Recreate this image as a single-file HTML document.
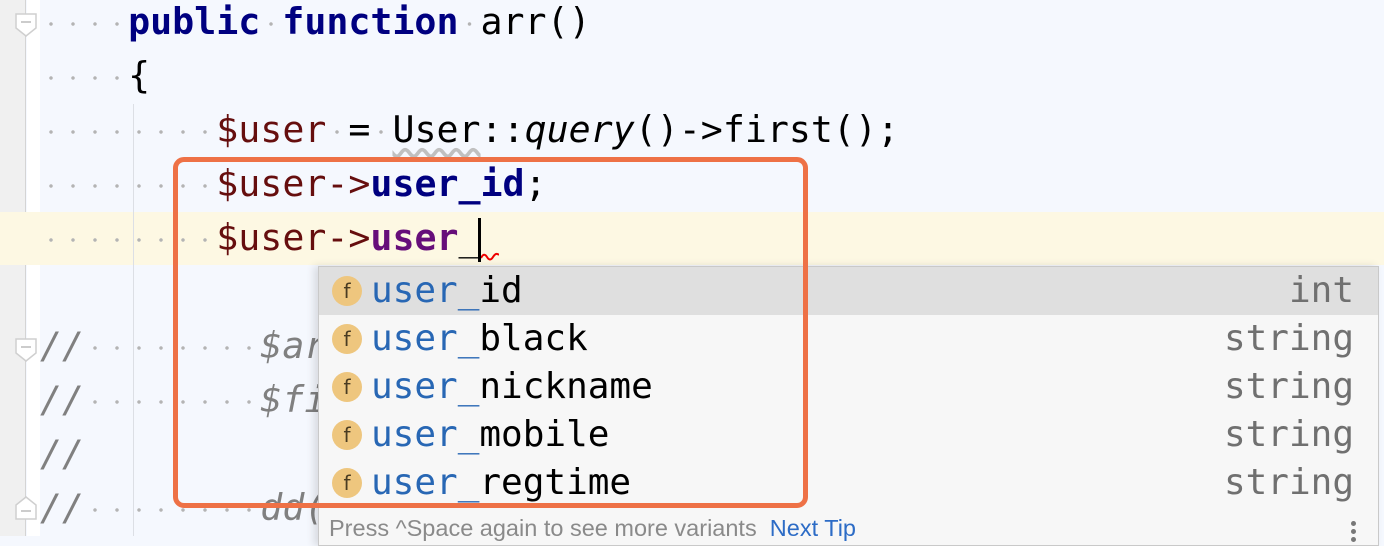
<!DOCTYPE html>
<html><head><meta charset="utf-8"><style>
*{margin:0;padding:0;box-sizing:border-box}
body{width:1384px;height:536px;overflow:hidden;background:#f5f8fe;position:relative;font-family:"DejaVu Sans Mono","Liberation Mono",monospace;font-size:36.6px}
.gut{position:absolute;left:0;top:0;width:26px;height:536px;background:#f0f0f0;border-right:1px solid #d4d4d4}
.gut2{position:absolute;left:27px;top:0;width:13px;height:536px;background:#fff}
.cur{position:absolute;left:0;top:212px;width:1384px;height:53px;background:#fdf8e3}
.ln{position:absolute;left:40px;height:54px;line-height:54px;white-space:pre;color:#000}
.s{display:inline-block;width:0.602em;height:10px;background:radial-gradient(circle,#b4b4b4 1.5px,transparent 2px);vertical-align:middle}
.kw{color:#000080;font-weight:bold}
.v{color:#660e0e}
.f{color:#000080;font-weight:bold}
.fp{color:#660e7a;font-weight:bold}
.c{color:#808080;font-style:italic}
.guide{position:absolute;left:133px;top:104px;width:1px;height:432px;background:#dcdfe5}
.fold{position:absolute;left:15px;width:22px;height:24px}
.pop{position:absolute;left:318px;top:266px;width:1061px;height:280px;background:#f7f7f7;border:1px solid #c9c9c9;box-shadow:-4px 0 8px rgba(0,0,0,.12)}
.row{position:absolute;left:0;width:1059px;height:48px;line-height:48px}
.row.sel{background:#dfdfdf}
.ic{position:absolute;left:13px;top:9px;width:30px;height:30px;border-radius:50%;background:#eec67e;color:#4a3c22;font-family:"DejaVu Sans","Liberation Sans",sans-serif;font-size:20px;line-height:30px;text-align:center}
.nm{position:absolute;left:52px;font-size:36px;color:#000}
.nm b{font-weight:normal;color:#2867b4}
.ty{position:absolute;right:24px;font-size:36px;color:#707070}
.foot{position:absolute;left:10px;top:248px;line-height:26px;font-family:"Liberation Sans",sans-serif;font-size:23.5px;color:#8a8a8a;white-space:pre}
.foot span{color:#2d6cc6}
.box{position:absolute;left:173px;top:157px;width:635px;height:351px;border:5px solid #ee7146;border-radius:11px}
</style></head><body>
<div class="gut"></div><div class="gut2"></div>
<div class="cur"></div>
<div class="guide"></div>
<svg class="fold" style="top:13px" viewBox="0 0 22 24"><path d="M1 1H21V15L11 23L1 15Z" fill="#fff" stroke="#cfcfcf" stroke-width="1.5"/><path d="M6 9H16" stroke="#bbb" stroke-width="1.5"/></svg>
<svg class="fold" style="top:338px" viewBox="0 0 22 24"><path d="M1 1H21V15L11 23L1 15Z" fill="#fff" stroke="#cfcfcf" stroke-width="1.5"/><path d="M6 9H16" stroke="#bbb" stroke-width="1.5"/></svg>
<svg class="fold" style="top:496px" viewBox="0 0 22 24"><path d="M1 23H21V9L11 1L1 9Z" fill="#fff" stroke="#cfcfcf" stroke-width="1.5"/><path d="M6 15H16" stroke="#bbb" stroke-width="1.5"/></svg>

<div class="ln" style="top:-5px"><i class="s"></i><i class="s"></i><i class="s"></i><i class="s"></i><span class="kw">public</span><i class="s"></i><span class="kw">function</span><i class="s"></i>arr()</div>
<div class="ln" style="top:49px"><i class="s"></i><i class="s"></i><i class="s"></i><i class="s"></i>{</div>
<div class="ln" style="top:103px"><i class="s"></i><i class="s"></i><i class="s"></i><i class="s"></i><i class="s"></i><i class="s"></i><i class="s"></i><i class="s"></i><span class="v">$user</span><i class="s"></i>=<i class="s"></i><span style="text-decoration:underline wavy #c0c0c0;text-underline-offset:6px">User</span>::<i>query</i>()-&gt;first();</div>
<div class="ln" style="top:157px"><i class="s"></i><i class="s"></i><i class="s"></i><i class="s"></i><i class="s"></i><i class="s"></i><i class="s"></i><i class="s"></i><span class="v">$user</span><span class="v">-&gt;</span><span class="f">user_id</span>;</div>
<div class="ln" style="top:211px"><i class="s"></i><i class="s"></i><i class="s"></i><i class="s"></i><i class="s"></i><i class="s"></i><i class="s"></i><i class="s"></i><span class="v">$user</span><span class="v">-&gt;</span><span class="fp">user</span>_</div>
<div style="position:absolute;left:478px;top:218px;width:3px;height:44px;background:#000"></div>
<svg style="position:absolute;left:481px;top:252px" width="18" height="10"><path d="M0 6Q3 0 6 5T12 5T18 3" fill="none" stroke="#e00" stroke-width="2"/></svg>
<div class="ln c" style="top:319px">//<i class="s"></i><i class="s"></i><i class="s"></i><i class="s"></i><i class="s"></i><i class="s"></i><i class="s"></i><i class="s"></i>$arr</div>
<div class="ln c" style="top:373px">//<i class="s"></i><i class="s"></i><i class="s"></i><i class="s"></i><i class="s"></i><i class="s"></i><i class="s"></i><i class="s"></i>$fi</div>
<div class="ln c" style="top:427px">//</div>
<div class="ln c" style="top:481px">//<i class="s"></i><i class="s"></i><i class="s"></i><i class="s"></i><i class="s"></i><i class="s"></i><i class="s"></i><i class="s"></i>dd(</div>

<div class="pop">
<div class="row sel" style="top:0"><div class="ic">f</div><div class="nm"><b>user_</b>id</div><div class="ty">int</div></div>
<div class="row" style="top:48px"><div class="ic">f</div><div class="nm"><b>user_</b>black</div><div class="ty">string</div></div>
<div class="row" style="top:96px"><div class="ic">f</div><div class="nm"><b>user_</b>nickname</div><div class="ty">string</div></div>
<div class="row" style="top:144px"><div class="ic">f</div><div class="nm"><b>user_</b>mobile</div><div class="ty">string</div></div>
<div class="row" style="top:192px"><div class="ic">f</div><div class="nm"><b>user_</b>regtime</div><div class="ty">string</div></div>
<div class="foot">Press ^Space again to see more variants  <span>Next Tip</span></div>
<div style="position:absolute;left:1032px;top:254px;width:5px;height:5px;border-radius:50%;background:#777;box-shadow:0 8px 0 #777,0 16px 0 #777"></div>
</div>
<div class="box"></div>
</body></html>
